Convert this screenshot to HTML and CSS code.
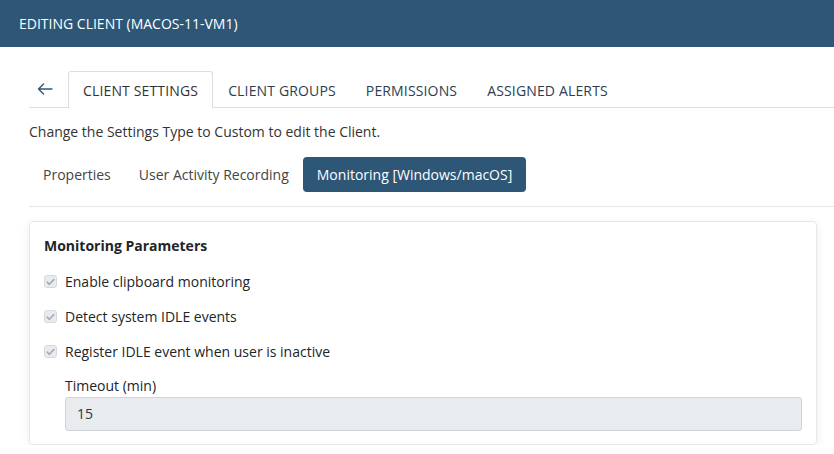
FILE: index.html
```html
<!DOCTYPE html>
<html>
<head>
<meta charset="utf-8">
<link rel="stylesheet" href="styles.css">
</head>
<body>
<header class="topbar">EDITING CLIENT (MACOS-11-VM1)</header>
<main class="page">
  <nav class="tabs">
    <a class="back" href="#" aria-label="Back">
      <svg width="16" height="12" viewBox="0 0 16 12"><path d="M15 6H1.5M6.5 1L1.5 6l5 5" fill="none" stroke="#2d5677" stroke-width="1.4" stroke-linecap="round" stroke-linejoin="round"/></svg>
    </a>
    <a class="tab active" href="#">CLIENT SETTINGS</a>
    <a class="tab" href="#">CLIENT GROUPS</a>
    <a class="tab" href="#">PERMISSIONS</a>
    <a class="tab" href="#">ASSIGNED ALERTS</a>
  </nav>
  <p class="note">Change the Settings Type to Custom to edit the Client.</p>
  <div class="pills">
    <a class="pill" href="#">Properties</a>
    <a class="pill" href="#">User Activity Recording</a>
    <a class="pill active" href="#">Monitoring [Windows/macOS]</a>
  </div>
  <hr class="rule">
  <section class="card">
    <h3 class="card-title">Monitoring Parameters</h3>
    <label class="check"><span class="box"><svg width="9" height="8" viewBox="0 0 9 8"><path d="M1.2 4.2l2.2 2.1L7.8 1.6" fill="none" stroke="#a3aab3" stroke-width="1.6" stroke-linecap="round" stroke-linejoin="round"/></svg></span>Enable clipboard monitoring</label>
    <label class="check"><span class="box"><svg width="9" height="8" viewBox="0 0 9 8"><path d="M1.2 4.2l2.2 2.1L7.8 1.6" fill="none" stroke="#a3aab3" stroke-width="1.6" stroke-linecap="round" stroke-linejoin="round"/></svg></span>Detect system IDLE events</label>
    <label class="check"><span class="box"><svg width="9" height="8" viewBox="0 0 9 8"><path d="M1.2 4.2l2.2 2.1L7.8 1.6" fill="none" stroke="#a3aab3" stroke-width="1.6" stroke-linecap="round" stroke-linejoin="round"/></svg></span>Register IDLE event when user is inactive</label>
    <div class="field">
      <div class="field-label">Timeout (min)</div>
      <div class="input">15</div>
    </div>
  </section>
</main>
</body>
</html>
```

FILE: styles.css
```css
* { box-sizing: border-box; }
html, body { margin: 0; padding: 0; background: #fff; }
body {
  font-family: "Open Sans", "Liberation Sans", sans-serif;
  font-size: 14px;
  color: #212529;
  overflow: hidden;
}
.topbar {
  height: 47px;
  background: #2d5677;
  color: #fff;
  display: flex;
  align-items: center;
  padding-left: 19px;
  font-size: 14px;
}
.page { padding: 24px 0 0 29px; }
.tabs {
  display: flex;
  align-items: stretch;
  border-bottom: 1px solid #dedede;
  height: 37px;
}
.tabs a { text-decoration: none; }
.back {
  width: 39px;
  display: flex;
  align-items: center;
  padding-left: 8px;
}
.tab {
  padding: 0 14px;
  display: flex;
  align-items: center;
  color: #2c3e50;
  font-size: 14px;
  letter-spacing: 0.15px;
  border: 1px solid transparent;
  border-bottom: none;
  margin-bottom: -1px;
}
.tab.active {
  border-color: #dedede;
  border-radius: 3px 3px 0 0;
  background: #fff;
  height: 37px;
  color: #333;
}
.note { margin: 14px 0 0; line-height: 20px; color: #333; }
.pills { display: flex; margin-top: 15px; }
.pill {
  height: 35px;
  line-height: 35px;
  padding: 0 14px;
  color: #444;
  text-decoration: none;
  border-radius: 4px;
}
.pill.active { background: #2d5677; color: #fff; }
.rule { border: 0; border-top: 1px solid #e6e6e6; margin: 14px 0 0; }
.card {
  margin: 14px 17px 0 0;
  border: 1px solid #e8e8e8;
  border-radius: 4px;
  box-shadow: 0 2px 10px rgba(0,0,0,0.08);
  padding: 14px 14px 12px 14px;
  height: 224px;
}
.card-title {
  margin: 0 0 8px;
  font-size: 14px;
  font-weight: 700;
  line-height: 20px;
  color: #212529;
}
.check {
  display: flex;
  align-items: center;
  height: 35px;
  color: #212529;
}
.box {
  width: 13px;
  height: 13px;
  border: 1px solid #d5d9de;
  border-radius: 3px;
  background: #e9ecef;
  margin-right: 8px;
  display: flex;
  align-items: center;
  justify-content: center;
}
.field { padding-left: 21px; margin-top: 7px; }
.field-label { line-height: 20px; color: #212529; }
.input {
  margin-top: 1px;
  height: 34px;
  line-height: 32px;
  background: #e9ecef;
  border: 1px solid #ced4da;
  border-radius: 3px;
  padding: 0 11px;
  color: #333;
}
```
